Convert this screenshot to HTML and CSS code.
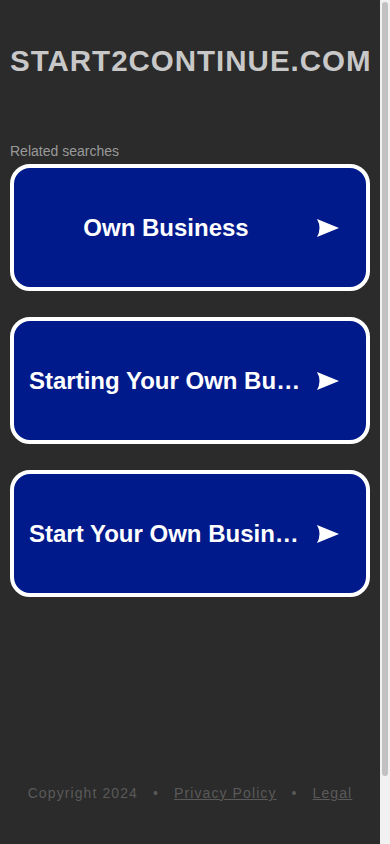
FILE: index.html
```html
<!DOCTYPE html>
<html lang="en">
<head>
<meta charset="utf-8">
<meta name="viewport" content="width=device-width, initial-scale=1">
<title>start2continue.com</title>
<link rel="stylesheet" href="styles.css">
</head>
<body>
<div class="page">
  <header class="header">
    <h1 class="domain">START2CONTINUE.COM</h1>
  </header>
  <main class="related">
    <p class="related-label">Related searches</p>
    <ul class="links">
      <li><a class="link-card" href="#"><span class="link-text">Own Business</span><svg class="link-arrow" viewBox="0 0 22 18" width="22" height="18" aria-hidden="true"><path d="M0 0 L22 9 L0 18 Q5 9 0 0 Z" fill="#ffffff"/></svg></a></li>
      <li><a class="link-card" href="#"><span class="link-text">Starting Your Own Business</span><svg class="link-arrow" viewBox="0 0 22 18" width="22" height="18" aria-hidden="true"><path d="M0 0 L22 9 L0 18 Q5 9 0 0 Z" fill="#ffffff"/></svg></a></li>
      <li><a class="link-card" href="#"><span class="link-text">Start Your Own Business Ideas</span><svg class="link-arrow" viewBox="0 0 22 18" width="22" height="18" aria-hidden="true"><path d="M0 0 L22 9 L0 18 Q5 9 0 0 Z" fill="#ffffff"/></svg></a></li>
    </ul>
  </main>
  <footer class="footer">
    <span>Copyright 2024</span>
    <span class="dot">•</span>
    <a class="footer-link" href="#">Privacy Policy</a>
    <span class="dot">•</span>
    <a class="footer-link" href="#">Legal</a>
  </footer>
</div>
<div class="scrollbar" aria-hidden="true"><div class="scrollbar-thumb"></div></div>
</body>
</html>
```

FILE: styles.css
```css
html, body {
  margin: 0;
  padding: 0;
  background: #2b2b2b;
}
body {
  font-family: "Liberation Sans", Arial, sans-serif;
}
.page {
  width: calc(100% - 10px);
  padding: 0 10px;
  min-height: 920px;
  display: flex;
  flex-direction: column;
  box-sizing: border-box;
}
.header {
  padding-top: 44px;
}
.domain {
  margin: 0;
  text-align: center;
  font-size: 29.5px;
  line-height: 34px;
  font-weight: bold;
  letter-spacing: 1px;
  color: #c8c8c8;
}
.related {
  margin-top: 64px;
}
.related-label {
  margin: 0 0 4px;
  font-size: 14px;
  line-height: 18px;
  color: #9a9a9a;
}
.links {
  list-style: none;
  margin: 0;
  padding: 0;
  display: flex;
  flex-direction: column;
  gap: 26px;
}
.link-card {
  display: flex;
  align-items: center;
  height: 127px;
  box-sizing: border-box;
  border: 4px solid #ffffff;
  border-radius: 20px;
  background: #011a8b;
  color: #ffffff;
  text-decoration: none;
  padding: 0 27px 0 15px;
}
.link-text {
  flex: 1;
  min-width: 0;
  text-align: center;
  font-size: 24px;
  font-weight: bold;
  white-space: nowrap;
  overflow: hidden;
  text-overflow: ellipsis;
}
.link-arrow {
  flex: none;
  margin-left: 14px;
}
.footer {
  margin-top: auto;
  padding-bottom: 119px;
  text-align: center;
  font-size: 14px;
  letter-spacing: 1.1px;
  color: #5a5a5a;
}
.dot {
  margin: 0 10px;
}
.footer-link {
  color: #5a5a5a;
  text-decoration: underline;
}
.scrollbar {
  position: fixed;
  top: 0;
  right: 0;
  width: 10px;
  height: 100%;
  background: #f1f1f1;
}
.scrollbar-thumb {
  margin: 2px 2px 0 2px;
  height: 774px;
  background: #c1c1c1;
  border-radius: 3px;
}
```
